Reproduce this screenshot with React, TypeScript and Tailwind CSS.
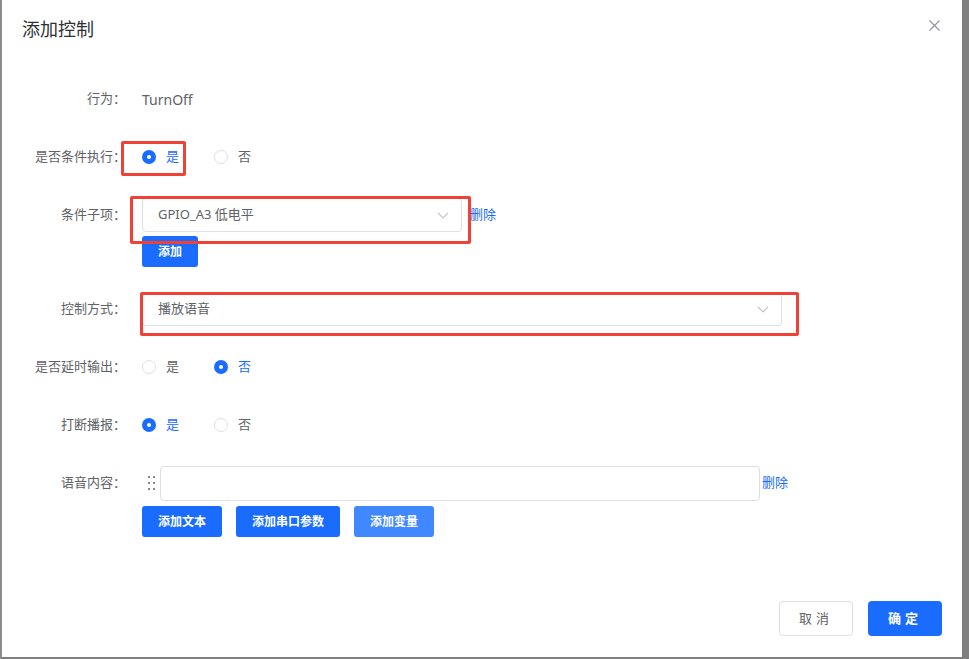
import React from "react";

const font = "font-['Noto_Sans','Noto_Sans_CJK_SC',sans-serif]";

function Radio({ checked, label }: { checked: boolean; label: string }) {
  return (
    <div className="flex items-center">
      <span
        className={[
          "flex h-[14px] w-[14px] items-center justify-center rounded-full",
          checked ? "bg-[#1a6cff]" : "border border-[#dcdfe6] bg-white",
        ].join(" ")}
      >
        {checked && <span className="h-[4px] w-[4px] rounded-full bg-white" />}
      </span>
      <span className={["ml-[10px] text-[13px]", checked ? "text-[#1a6cff]" : "text-[#606266]"].join(" ")}>
        {label}
      </span>
    </div>
  );
}

function RadioPair({ yes }: { yes: boolean }) {
  return (
    <div className="flex items-center gap-[35px]">
      <Radio checked={yes} label="是" />
      <Radio checked={!yes} label="否" />
    </div>
  );
}

function Chevron() {
  return (
    <svg width="12" height="7" viewBox="0 0 12 7" fill="none">
      <path d="M1 1l5 5 5-5" stroke="#c0c4cc" strokeWidth="1.1" />
    </svg>
  );
}

function Row({ label, children, className = "" }: { label: string; children: React.ReactNode; className?: string }) {
  return (
    <div className={["flex h-[34px] items-center", className].join(" ")}>
      <div className="w-[124px] shrink-0 text-right text-[13px] text-[#606266]">{label}：</div>
      <div className="ml-[16px] flex flex-1 items-center">{children}</div>
    </div>
  );
}

function BlueButton({ children, light }: { children: React.ReactNode; light?: boolean }) {
  return (
    <button
      className={[
        "h-[31px] rounded-[3px] px-[16px] text-[12px] font-bold text-white",
        light ? "bg-[#3f88ff]" : "bg-[#1a6cff]",
      ].join(" ")}
    >
      {children}
    </button>
  );
}

export default function App() {
  return (
    <div className={`relative flex h-[659px] w-[969px] overflow-hidden bg-[#7f7f7f] ${font}`}>
      <div className="w-[2px] bg-[#8c8c8c]" />
      <div className="relative flex h-[657px] w-[960px] flex-col bg-white">
        {/* header */}
        <div className="flex h-[58px] items-start justify-between pl-[20px] pr-[22px] pt-[16px]">
          <h1 className="text-[18px] leading-[26px] text-[#303133]">添加控制</h1>
          <svg width="11" height="11" viewBox="0 0 11 11" className="mt-[4px]">
            <path d="M0.5 0.5l10 10M10.5 0.5l-10 10" stroke="#909399" strokeWidth="1.1" />
          </svg>
        </div>

        {/* form */}
        <div className="flex flex-col pt-[24px]">
          <Row label="行为">
            <span className="text-[14px] text-[#606266]">TurnOff</span>
          </Row>

          <Row label="是否条件执行" className="mt-[24px]">
            <RadioPair yes />
          </Row>

          <Row label="条件子项" className="mt-[24px]">
            <div className="flex h-[34px] w-[320px] items-center justify-between rounded-[4px] border border-[#dcdfe6] pl-[15px] pr-[12px]">
              <span className="text-[13px] text-[#606266]">GPIO_A3 低电平</span>
              <Chevron />
            </div>
            <span className="ml-[8px] text-[13px] text-[#1a6cff]">删除</span>
          </Row>
          <div className="ml-[140px] mt-[4px]">
            <BlueButton>添加</BlueButton>
          </div>

          <Row label="控制方式" className="mt-[25px]">
            <div className="flex h-[34px] w-[640px] items-center justify-between rounded-[4px] border border-[#dcdfe6] pl-[15px] pr-[12px]">
              <span className="text-[13px] text-[#606266]">播放语音</span>
              <Chevron />
            </div>
          </Row>

          <Row label="是否延时输出" className="mt-[24px]">
            <RadioPair yes={false} />
          </Row>

          <Row label="打断播报" className="mt-[24px]">
            <RadioPair yes />
          </Row>

          <Row label="语音内容" className="mt-[24px]">
            <div className="grid w-[18px] grid-cols-[2px_2px] gap-x-[3px] gap-y-[4px] pl-[6px]">
              {Array.from({ length: 6 }).map((_, i) => (
                <span key={i} className="h-[2px] w-[2px] rounded-full bg-[#606266]" />
              ))}
            </div>
            <div className="h-[35px] w-[600px] rounded-[4px] border border-[#dcdfe6]" />
            <span className="ml-[2px] text-[13px] text-[#1a6cff]">删除</span>
          </Row>
          <div className="ml-[140px] mt-[6px] flex gap-[14px]">
            <BlueButton>添加文本</BlueButton>
            <BlueButton>添加串口参数</BlueButton>
            <BlueButton light>添加变量</BlueButton>
          </div>
        </div>

        {/* footer */}
        <div className="mt-auto flex justify-end gap-[15px] pb-[21px] pr-[20px]">
          <button className="h-[35px] w-[74px] rounded-[4px] border border-[#dcdfe6] bg-white text-[13px] tracking-[4px] text-[#606266]">
            取消
          </button>
          <button className="h-[35px] w-[74px] rounded-[4px] bg-[#1a6cff] text-[13px] font-bold tracking-[4px] text-white">
            确定
          </button>
        </div>

        {/* annotation boxes */}
        <div className="pointer-events-none absolute left-[119px] top-[141px] h-[35px] w-[65px] rounded-[2px] border-[3px] border-[#ef4136]" />
        <div className="pointer-events-none absolute left-[128px] top-[196px] h-[48px] w-[341px] rounded-[2px] border-[3px] border-[#ef4136]" />
        <div className="pointer-events-none absolute left-[138px] top-[292px] h-[44px] w-[659px] rounded-[2px] border-[3px] border-[#ef4136]" />
      </div>
    </div>
  );
}
